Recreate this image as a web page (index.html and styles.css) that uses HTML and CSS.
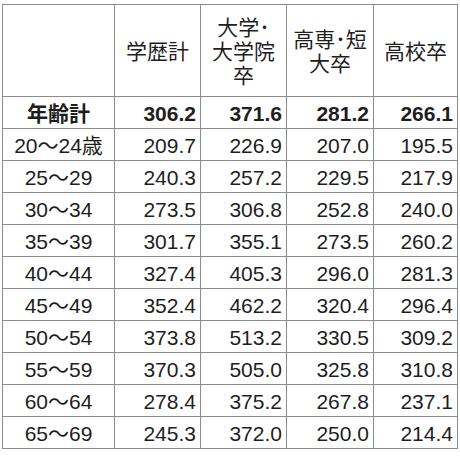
FILE: index.html
```html
<!DOCTYPE html>
<html lang="ja">
<head>
<meta charset="utf-8">
<link rel="stylesheet" href="styles.css">
</head>
<body>
<table class="wage">
  <colgroup>
    <col class="c-label">
    <col class="c-a">
    <col class="c-b">
    <col class="c-c">
    <col class="c-d">
  </colgroup>
  <thead>
    <tr class="head">
      <th></th>
      <th>学歴計</th>
      <th>大学･<br>大学院<br>卒</th>
      <th>高専･短<br>大卒</th>
      <th>高校卒</th>
    </tr>
  </thead>
  <tbody>
    <tr class="total"><td>年齢計</td><td>306.2</td><td>371.6</td><td>281.2</td><td>266.1</td></tr>
    <tr><td>20～24歳</td><td>209.7</td><td>226.9</td><td>207.0</td><td>195.5</td></tr>
    <tr><td>25～29</td><td>240.3</td><td>257.2</td><td>229.5</td><td>217.9</td></tr>
    <tr><td>30～34</td><td>273.5</td><td>306.8</td><td>252.8</td><td>240.0</td></tr>
    <tr><td>35～39</td><td>301.7</td><td>355.1</td><td>273.5</td><td>260.2</td></tr>
    <tr><td>40～44</td><td>327.4</td><td>405.3</td><td>296.0</td><td>281.3</td></tr>
    <tr><td>45～49</td><td>352.4</td><td>462.2</td><td>320.4</td><td>296.4</td></tr>
    <tr><td>50～54</td><td>373.8</td><td>513.2</td><td>330.5</td><td>309.2</td></tr>
    <tr><td>55～59</td><td>370.3</td><td>505.0</td><td>325.8</td><td>310.8</td></tr>
    <tr><td>60～64</td><td>278.4</td><td>375.2</td><td>267.8</td><td>237.1</td></tr>
    <tr><td>65～69</td><td>245.3</td><td>372.0</td><td>250.0</td><td>214.4</td></tr>
  </tbody>
</table>
</body>
</html>
```
FILE: styles.css
```css
html, body {
  margin: 0;
  padding: 0;
  background: #ffffff;
}

body {
  padding: 4px 0 0 2px;
  font-family: "Liberation Sans", "Noto Sans CJK JP", sans-serif;
  color: #1e1e1e;
}

.wage {
  border-collapse: collapse;
  table-layout: fixed;
  width: 455px;
  font-size: 21px;
}

.c-label { width: 112px; }
.c-a { width: 86px; }
.c-b { width: 86px; }
.c-c { width: 87px; }
.c-d { width: 84px; }

.wage th,
.wage td {
  border: 1px solid #8c8c8c;
  padding: 0 4px 0 0;
  white-space: nowrap;
  overflow: hidden;
}

.head th {
  height: 89px;
  font-weight: normal;
  text-align: center;
  vertical-align: middle;
  line-height: 24px;
  padding: 2px 0 0 0;
}

.wage tbody td {
  height: 29px;
  text-align: right;
  vertical-align: middle;
  line-height: 24px;
  padding-top: 2px;
}

.wage tbody td:first-child {
  text-align: center;
  padding-right: 0;
}

.total td {
  font-weight: bold;
}
```
